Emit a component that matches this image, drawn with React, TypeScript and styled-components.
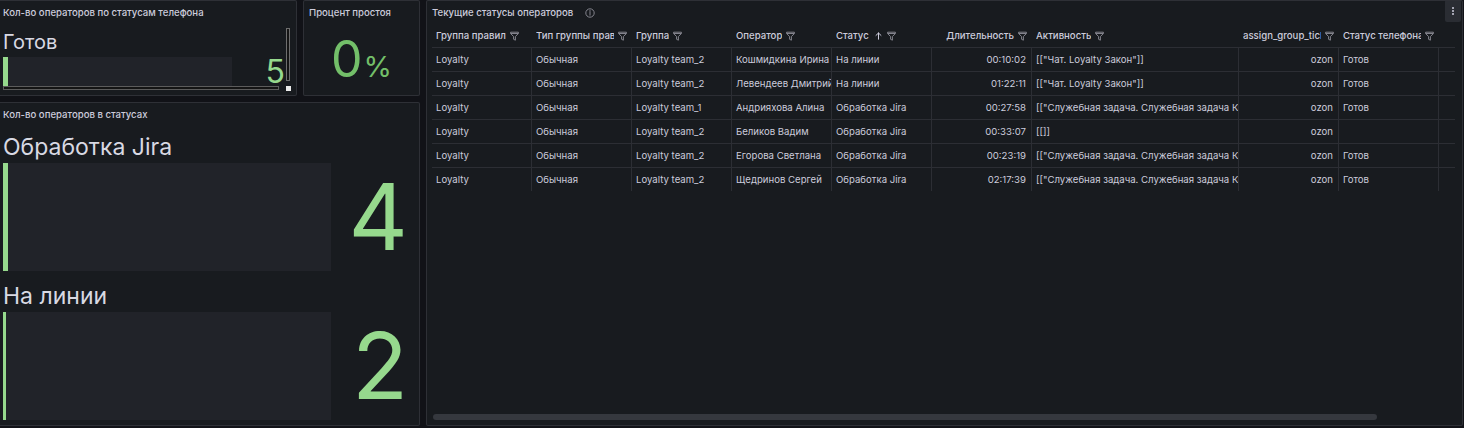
import React from "react";
import styled, { createGlobalStyle } from "styled-components";

const GlobalStyle = createGlobalStyle`
  html, body { margin: 0; padding: 0; background: #111217; }
  body { font-family: Inter, "Noto Sans", sans-serif; color: #ccccdc; overflow: hidden; }
  * { box-sizing: border-box; }
`;

const BORDER = "rgba(204, 204, 220, 0.12)";
const LINE = "#2c2e34";
const GAUGE_GREEN = "#96d98d";
const STAT_GREEN = "#73bf69";

const Dashboard = styled.div`
  display: grid;
  grid-template-columns: 423px 1037px;
  column-gap: 6px;
  width: 1466px;
  height: 426px;
  margin-left: -3px;
`;

const LeftColumn = styled.div`
  display: flex;
  flex-direction: column;
  gap: 6px;
  min-width: 0;
`;

const TopRow = styled.div`
  display: flex;
  gap: 6px;
  height: 96px;
`;

const Panel = styled.section<{ $w?: number; $h?: number }>`
  background: #181b1f;
  border: 1px solid ${BORDER};
  border-radius: 2px;
  display: flex;
  flex-direction: column;
  overflow: hidden;
  min-width: 0;
  ${(p) => (p.$w ? `width: ${p.$w}px; flex: none;` : "")}
  ${(p) => (p.$h ? `height: ${p.$h}px;` : "")}
`;

const PanelHeader = styled.header`
  height: 23px;
  flex: none;
  display: flex;
  align-items: center;
  padding: 0 1px 0 5px;
`;

const Title = styled.h2`
  margin: 0;
  font-size: 9.6px;
  font-weight: 500;
  line-height: 1;
  color: #ccccdc;
  white-space: nowrap;
`;

const InfoIcon = styled.span`
  display: inline-flex;
  margin-left: 12px;
  color: #8e8e99;
`;

const HeaderSpacer = styled.div`
  flex: 1;
`;

const MenuButton = styled.button`
  align-self: flex-start;
  width: 16px;
  height: 22px;
  margin-top: -1px;
  border: none;
  border-radius: 2px;
  background: #2a2d33;
  color: #ccccdc;
  display: flex;
  align-items: center;
  justify-content: center;
  padding: 0;
`;

/* ---------- bar gauge ---------- */

const ScrollFrame = styled.div`
  display: grid;
  grid-template-columns: 1fr 6px;
  grid-template-rows: 58px 5px;
  margin-top: 4px;
  padding: 0 5px 0 5px;
`;

const GaugeList = styled.div<{ $pt: number; $gap: number }>`
  display: flex;
  flex-direction: column;
  gap: ${(p) => p.$gap}px;
  padding: ${(p) => p.$pt}px 5px 0 5px;
  min-width: 0;
`;

const Gauge = styled.div<{ $gap: number; $top?: number }>`
  display: flex;
  flex-direction: column;
  gap: ${(p) => p.$gap}px;
  padding-top: ${(p) => p.$top ?? 0}px;
`;

const GaugeLabel = styled.div<{ $size: number; $lh: number }>`
  font-size: ${(p) => p.$size}px;
  line-height: ${(p) => p.$lh}px;
  color: #d8d9e3;
  white-space: nowrap;
`;

const BarRow = styled.div<{ $h: number }>`
  display: flex;
  height: ${(p) => p.$h}px;
`;

const Track = styled.div`
  flex: 1;
  display: flex;
  background: #212329;
`;

const Fill = styled.div<{ $w: number }>`
  width: ${(p) => p.$w}px;
  background: ${GAUGE_GREEN};
`;

const GaugeValue = styled.div<{ $size: number; $w: number; $pr: number }>`
  width: ${(p) => p.$w}px;
  flex: none;
  display: flex;
  align-items: center;
  justify-content: flex-end;
  padding-right: ${(p) => p.$pr}px;
  font-size: ${(p) => p.$size}px;
  line-height: 1;
  color: ${GAUGE_GREEN};
`;

const VThumb = styled.div`
  margin-left: 1px;
  width: 4px;
  height: 53px;
  background: #141414;
  border: 1px solid #6e6e6e;
`;

const HThumb = styled.div`
  width: calc(100% - 6px);
  height: 4px;
  background: #141414;
  border: 1px solid #5c5c5c;
`;

const Corner = styled.div`
  margin-left: 1px;
  width: 5px;
  height: 5px;
  background: #ececec;
`;

/* ---------- stat ---------- */

const StatBody = styled.div`
  flex: 1;
  display: flex;
  align-items: center;
  justify-content: center;
  padding-bottom: 2px;
`;

const StatValue = styled.div`
  display: flex;
  align-items: baseline;
  color: ${STAT_GREEN};
  line-height: 1;
`;

const StatNumber = styled.span`
  font-size: 50px;
`;

const StatUnit = styled.span`
  font-size: 29px;
  margin-left: 1px;
`;

/* ---------- table ---------- */

const COLS = "100px 100px 100px 100px 100px 100px 207px 100px 100px 16px";

const TableBody = styled.div`
  flex: 1;
  display: flex;
  flex-direction: column;
  padding: 0 5px 5px 5px;
  min-height: 0;
`;

const Table = styled.div`
  display: flex;
  flex-direction: column;
  width: 1023px;
  font-size: 9.6px;
`;

const HeadRow = styled.div`
  display: grid;
  grid-template-columns: ${COLS};
  height: 24px;
  border-bottom: 1px solid ${LINE};
`;

const HeadCell = styled.div<{ $right?: boolean }>`
  display: flex;
  align-items: center;
  justify-content: ${(p) => (p.$right ? "flex-end" : "flex-start")};
  gap: 4px;
  min-width: 0;
  padding: 0 5px 0 4px;
  font-weight: 500;
  color: #ccccdc;
`;

const HeadText = styled.span`
  overflow: hidden;
  white-space: nowrap;
  min-width: 0;
`;

const SortArrow = styled.span`
  display: inline-flex;
  margin-left: 2px;
  margin-right: 1px;
  color: #ccccdc;
`;

const IconWrap = styled.span`
  display: inline-flex;
  flex: none;
  color: #8e8e99;
`;

const Row = styled.div<{ $last?: boolean }>`
  display: grid;
  grid-template-columns: ${COLS};
  height: 24px;
  border-bottom: 1px solid ${(p) => (p.$last ? "transparent" : LINE)};
`;

const Cell = styled.div<{ $right?: boolean; $blank?: boolean }>`
  min-width: 0;
  overflow: hidden;
  white-space: nowrap;
  line-height: 23px;
  padding: 0 5px 0 4px;
  text-align: ${(p) => (p.$right ? "right" : "left")};
  border-right: ${(p) => (p.$blank ? "none" : `1px solid ${LINE}`)};
  color: #ccccdc;
`;

const HScroll = styled.div`
  margin-top: auto;
  margin-left: 1px;
  width: 944px;
  height: 6px;
  border-radius: 3px;
  background: #35383e;
`;

/* ---------- icons ---------- */

const FilterIcon = () => (
  <svg width="9" height="10" viewBox="0 0 9 10" fill="none" stroke="currentColor" strokeWidth="0.9" strokeLinejoin="round">
    <path d="M0.6 1.2h7.8v1.3L5.4 5.6v3.6L3.6 8.3V5.6L0.6 2.5z" />
    <path d="M0.8 2.5h7.4" />
  </svg>
);

const ArrowUp = () => (
  <svg width="7" height="8" viewBox="0 0 7 8" fill="none" stroke="currentColor" strokeWidth="1" strokeLinecap="round">
    <path d="M3.5 7.2V1" />
    <path d="M1 3.4L3.5 1L6 3.4" />
  </svg>
);

const Info = () => (
  <svg width="10" height="10" viewBox="0 0 10 10" fill="none" stroke="currentColor" strokeWidth="0.9">
    <circle cx="5" cy="5" r="4.2" />
    <path d="M5 4.4v2.8" strokeLinecap="round" />
    <circle cx="5" cy="3" r="0.3" fill="currentColor" />
  </svg>
);

const Dots = () => (
  <svg width="4" height="12" viewBox="0 0 4 12" fill="currentColor">
    <circle cx="2" cy="3" r="1" />
    <circle cx="2" cy="6" r="1" />
    <circle cx="2" cy="9" r="1" />
  </svg>
);

/* ---------- data ---------- */

type Col = { title: string; right?: boolean; sort?: boolean };

const columns: Col[] = [
  { title: "Группа правил" },
  { title: "Тип группы правил" },
  { title: "Группа" },
  { title: "Оператор" },
  { title: "Статус", sort: true },
  { title: "Длительность", right: true },
  { title: "Активность" },
  { title: "assign_group_ticket", right: true },
  { title: "Статус телефона" },
];

const TASK = '[["Служебная задача. Служебная задача Контроль качества"]]';
const CHAT = '[["Чат. Loyalty Закон"]]';

const rows: string[][] = [
  ["Loyalty", "Обычная", "Loyalty team_2", "Кошмидкина Ирина", "На линии", "00:10:02", CHAT, "ozon", "Готов"],
  ["Loyalty", "Обычная", "Loyalty team_2", "Левендеев Дмитрий", "На линии", "01:22:11", CHAT, "ozon", "Готов"],
  ["Loyalty", "Обычная", "Loyalty team_1", "Андрияхова Алина", "Обработка Jira", "00:27:58", TASK, "ozon", "Готов"],
  ["Loyalty", "Обычная", "Loyalty team_2", "Беликов Вадим", "Обработка Jira", "00:33:07", "[[]]", "ozon", ""],
  ["Loyalty", "Обычная", "Loyalty team_2", "Егорова Светлана", "Обработка Jira", "00:23:19", TASK, "ozon", "Готов"],
  ["Loyalty", "Обычная", "Loyalty team_2", "Щедринов Сергей", "Обработка Jira", "02:17:39", TASK, "ozon", "Готов"],
];

export default function App() {
  return (
    <>
      <GlobalStyle />
      <Dashboard>
        <LeftColumn>
          <TopRow>
            <Panel $w={300}>
              <PanelHeader>
                <Title>Кол-во операторов по статусам телефона</Title>
              </PanelHeader>
              <ScrollFrame>
                <Gauge $gap={3} $top={2}>
                  <GaugeLabel $size={20} $lh={24}>
                    Готов
                  </GaugeLabel>
                  <BarRow $h={29}>
                    <Track>
                      <Fill $w={5} />
                    </Track>
                    <GaugeValue $size={32} $w={53} $pr={0}>
                      5
                    </GaugeValue>
                  </BarRow>
                </Gauge>
                <VThumb />
                <HThumb />
                <Corner />
              </ScrollFrame>
            </Panel>
            <Panel $w={117}>
              <PanelHeader>
                <Title>Процент простоя</Title>
              </PanelHeader>
              <StatBody>
                <StatValue>
                  <StatNumber>0</StatNumber>
                  <StatUnit>%</StatUnit>
                </StatValue>
              </StatBody>
            </Panel>
          </TopRow>
          <Panel $h={324}>
            <PanelHeader>
              <Title>Кол-во операторов в статусах</Title>
            </PanelHeader>
            <GaugeList $pt={7} $gap={11}>
              <Gauge $gap={2}>
                <GaugeLabel $size={23} $lh={28}>
                  Обработка Jira
                </GaugeLabel>
                <BarRow $h={108}>
                  <Track>
                    <Fill $w={5} />
                  </Track>
                  <GaugeValue $size={92} $w={83} $pr={6}>
                    4
                  </GaugeValue>
                </BarRow>
              </Gauge>
              <Gauge $gap={2}>
                <GaugeLabel $size={23} $lh={28}>
                  На линии
                </GaugeLabel>
                <BarRow $h={108}>
                  <Track>
                    <Fill $w={3} />
                  </Track>
                  <GaugeValue $size={92} $w={83} $pr={6}>
                    2
                  </GaugeValue>
                </BarRow>
              </Gauge>
            </GaugeList>
          </Panel>
        </LeftColumn>

        <Panel>
          <PanelHeader>
            <Title>Текущие статусы операторов</Title>
            <InfoIcon>
              <Info />
            </InfoIcon>
            <HeaderSpacer />
            <MenuButton aria-label="menu">
              <Dots />
            </MenuButton>
          </PanelHeader>
          <TableBody>
            <Table>
              <HeadRow>
                {columns.map((c) => (
                  <HeadCell key={c.title} $right={c.right}>
                    <HeadText>{c.title}</HeadText>
                    {c.sort && (
                      <SortArrow>
                        <ArrowUp />
                      </SortArrow>
                    )}
                    <IconWrap>
                      <FilterIcon />
                    </IconWrap>
                  </HeadCell>
                ))}
                <HeadCell />
              </HeadRow>
              {rows.map((r, i) => (
                <Row key={i} $last={i === rows.length - 1}>
                  {r.map((v, j) => (
                    <Cell key={j} $right={columns[j].right}>
                      {v}
                    </Cell>
                  ))}
                  <Cell $blank />
                </Row>
              ))}
            </Table>
            <HScroll />
          </TableBody>
        </Panel>
      </Dashboard>
    </>
  );
}
